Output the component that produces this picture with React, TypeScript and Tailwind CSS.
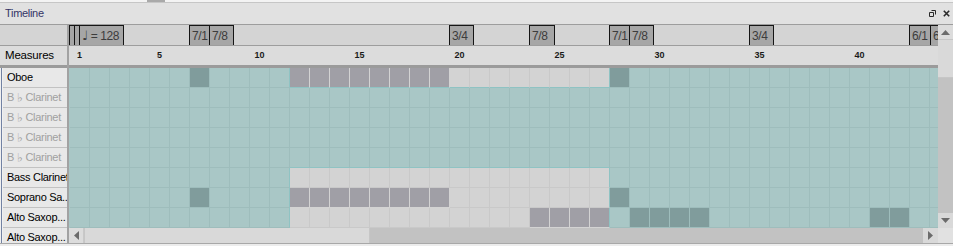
import React from "react";

type C = "t" | "T" | "g" | "G";
const COLS = 44;

function mkRow(spec: [number, number, C][]): C[] {
  const arr: C[] = Array(COLS).fill("t");
  for (const [a, b, c] of spec) for (let m = a; m <= b; m++) arr[m - 1] = c;
  return arr;
}

const rows: { label: string; muted?: boolean; cells: C[] }[] = [
  { label: "Oboe", cells: mkRow([[7, 7, "T"], [12, 19, "G"], [20, 27, "g"], [28, 28, "T"]]) },
  { label: "Clarinet", muted: true, cells: mkRow([]) },
  { label: "Clarinet", muted: true, cells: mkRow([]) },
  { label: "Clarinet", muted: true, cells: mkRow([]) },
  { label: "Clarinet", muted: true, cells: mkRow([]) },
  { label: "Bass Clarinet", cells: mkRow([[12, 27, "g"]]) },
  { label: "Soprano Sa..", cells: mkRow([[7, 7, "T"], [12, 19, "G"], [20, 27, "g"], [28, 28, "T"]]) },
  { label: "Alto Saxop...", cells: mkRow([[12, 23, "g"], [24, 27, "G"], [29, 32, "T"], [41, 42, "T"]]) },
];

const isGray = (c: C | undefined) => c === "g" || c === "G";

const bgOf: Record<C, string> = {
  t: "bg-[#a9c7c6]",
  T: "bg-[#809c9c]",
  g: "bg-[#d3d3d3]",
  G: "bg-[#a09fa6]",
};
const lineOf: Record<C, string> = {
  t: "#9ebdbc",
  T: "#9ebdbc",
  g: "#c9c9c9",
  G: "#d3d3d3",
};

function Cell({ c, right, below }: { c: C; right?: C; below?: C }) {
  const edge = "#8fc3c3";
  const rc = right !== undefined && isGray(c) !== isGray(right) ? edge : lineOf[c];
  const bc = below !== undefined && isGray(c) !== isGray(below) ? edge : lineOf[c];
  return (
    <div
      className={`w-[20px] h-[20px] shrink-0 border-r border-b ${bgOf[c]}`}
      style={{ borderRightColor: rc, borderBottomColor: bc }}
    />
  );
}

const markers: { left: number; w: number; text: string; tempo?: boolean }[] = [
  { left: 0, w: 6, text: "" },
  { left: 5, w: 6, text: "" },
  { left: 10, w: 45, text: "= 128", tempo: true },
  { left: 120, w: 21, text: "7/1" },
  { left: 140, w: 25, text: "7/8" },
  { left: 380, w: 25, text: "3/4" },
  { left: 460, w: 26, text: "7/8" },
  { left: 540, w: 21, text: "7/1" },
  { left: 560, w: 25, text: "7/8" },
  { left: 680, w: 25, text: "3/4" },
  { left: 840, w: 22, text: "6/1" },
  { left: 861, w: 20, text: "6" },
];

const measureNums = [1, 5, 10, 15, 20, 25, 30, 35, 40];

function ArrowUp() {
  return (
    <svg width="9" height="5" viewBox="0 0 9 5"><path d="M0 5 L4.5 0 L9 5 Z" fill="#6b6b6b" /></svg>
  );
}
function ArrowDown() {
  return (
    <svg width="9" height="5" viewBox="0 0 9 5"><path d="M0 0 L4.5 5 L9 0 Z" fill="#6b6b6b" /></svg>
  );
}
function ArrowLeft() {
  return (
    <svg width="5" height="9" viewBox="0 0 5 9"><path d="M5 0 L0 4.5 L5 9 Z" fill="#6b6b6b" /></svg>
  );
}
function ArrowRight() {
  return (
    <svg width="5" height="9" viewBox="0 0 5 9"><path d="M0 0 L5 4.5 L0 9 Z" fill="#6b6b6b" /></svg>
  );
}

export default function App() {
  return (
    <div
      className="w-[953px] h-[246px] overflow-hidden bg-[#f0f0f0] flex flex-col"
      style={{ fontFamily: '"Liberation Sans", Arial, sans-serif' }}
    >
      {/* top strip */}
      <div className="h-[3px] shrink-0 flex bg-[#f3f3f3] border-b border-[#c6c6c6]">
        <div className="w-[147px]" />
        <div className="w-[18px] bg-[#a9a9a9]" />
      </div>

      {/* title bar */}
      <div className="h-[22px] shrink-0 bg-[#e1e1e1] border-b border-[#9d9d9d] flex items-center justify-between pl-[5px] pr-[3px]">
        <span className="text-[11px] tracking-[-0.3px] text-[#343466] leading-none">Timeline</span>
        <div className="flex items-center gap-[7px] pb-[1px]">
          <svg width="7" height="7" viewBox="0 0 7 7">
            <path d="M0.5 2.5 H4.5 V6.5 H0.5 Z" fill="none" stroke="#2a2a2a" strokeWidth="1" />
            <path d="M2.5 0.5 H6.5 V4.5" fill="none" stroke="#2a2a2a" strokeWidth="1" />
          </svg>
          <svg width="7" height="7" viewBox="0 0 7 7">
            <path d="M0.8 0.8 L6.2 6.2 M6.2 0.8 L0.8 6.2" stroke="#2a2a2a" strokeWidth="1.6" />
          </svg>
        </div>
      </div>

      {/* body */}
      <div className="h-[218px] shrink-0 flex">
        {/* labels column */}
        <div className="w-[69px] shrink-0 flex flex-col overflow-hidden border-r-2 border-[#a2a2a2]">
          <div className="h-[21px] shrink-0 bg-[#d4d4d4] border-b border-[#9d9d9d]" />
          <div className="h-[19px] shrink-0 bg-[#dcdcdc] flex items-center pl-[5px] text-[11.5px] tracking-[-0.2px] text-black">
            Measures
          </div>
          <div className="h-[3px] shrink-0 bg-[#9b9b9b]" />
          <div className="flex flex-col border-l border-[#7282a3] ml-[1px]">
            {[...rows, { label: "Alto Saxop...", cells: [] as C[] }].map((r, i) => {
              const muted = (r as { muted?: boolean }).muted;
              return (
                <div
                  key={i}
                  className={`h-[20px] shrink-0 bg-[#e8e8e8] border-b border-[#c2c2c2] flex items-center pl-[4px] ml-[1px] text-[11px] tracking-[-0.3px] whitespace-nowrap overflow-hidden ${
                    muted ? "text-[#a0a0a0]" : "text-black"
                  }`}
                >
                  {muted ? (
                    <>
                      <span>B</span>
                      <span
                        className="text-[12px] leading-none mx-[3px]"
                        style={{ fontFamily: '"DejaVu Sans", sans-serif' }}
                      >
                        {"\u266D"}
                      </span>
                      <span>{r.label}</span>
                    </>
                  ) : (
                    r.label
                  )}
                </div>
              );
            })}
          </div>
        </div>

        {/* center canvas */}
        <div className="w-[869px] shrink-0 flex flex-col overflow-hidden">
          {/* tempo / time signature row */}
          <div className="h-[21px] shrink-0 relative bg-[#d4d4d4] border-b border-[#9d9d9d] overflow-hidden">
            {markers.map((m, i) => (
              <div
                key={i}
                className="absolute top-0 h-[21px] bg-[#a6a6a6] border border-[#151515] flex items-center pl-[2px] text-[12px] tracking-[-0.4px] text-[#3c3c3c] whitespace-nowrap overflow-hidden"
                style={{ left: m.left, width: m.w }}
              >
                {m.tempo && (
                  <span
                    className="text-[13px] leading-none mr-[3px] text-[#3c3c3c]"
                    style={{ fontFamily: '"DejaVu Sans", sans-serif' }}
                  >
                    {"\u2669"}
                  </span>
                )}
                {m.text}
              </div>
            ))}
          </div>
          {/* measures numbers */}
          <div className="h-[19px] shrink-0 bg-[#dcdcdc] flex items-center pl-[1px]">
            {Array.from({ length: COLS }).map((_, i) => (
              <div
                key={i}
                className="w-[20px] shrink-0 pr-[1px] text-center text-[9px] font-bold text-[#1a1a1a]"
              >
                {measureNums.includes(i + 1) ? i + 1 : ""}
              </div>
            ))}
          </div>
          <div className="h-[3px] shrink-0 bg-[#9b9b9b]" />
          {/* grid */}
          <div className="h-[160px] shrink-0 flex flex-col bg-[#a9c7c6] pl-[1px] overflow-hidden">
            {rows.map((r, ri) => (
              <div key={ri} className="flex shrink-0">
                {r.cells.map((c, ci) => (
                  <Cell
                    key={ci}
                    c={c}
                    right={r.cells[ci + 1]}
                    below={rows[ri + 1] ? rows[ri + 1].cells[ci] : undefined}
                  />
                ))}
              </div>
            ))}
          </div>
          {/* horizontal scrollbar */}
          <div className="h-[15px] shrink-0 flex bg-[#c2c2c2]">
            <div className="w-[15px] shrink-0 bg-[#dcdcdc] border-r border-[#c8c8c8] flex items-center justify-center">
              <ArrowLeft />
            </div>
            <div className="w-[286px] shrink-0 bg-[#d9d9d9] border-x border-[#c6c6c6]" />
            <div className="flex-1" />
            <div className="w-[15px] shrink-0 bg-[#d9d9d9] flex items-center justify-center">
              <ArrowRight />
            </div>
          </div>
        </div>

        {/* vertical scrollbar */}
        <div className="w-[15px] shrink-0 flex flex-col">
          <div className="h-[203px] shrink-0 flex flex-col bg-[#c2c2c2]">
            <div className="h-[14px] shrink-0 bg-[#dcdcdc] flex items-center justify-center">
              <ArrowUp />
            </div>
            <div className="h-[39px] shrink-0 bg-[#d9d9d9] border-y border-[#c6c6c6]" />
            <div className="flex-1" />
            <div className="h-[15px] shrink-0 bg-[#d9d9d9] flex items-center justify-center">
              <ArrowDown />
            </div>
          </div>
          <div className="flex-1 bg-[#e1e1e1]" />
        </div>
      </div>

      {/* bottom strip */}
      <div className="flex-1 bg-[#ececec] border-t border-[#a8a8a8]" />
    </div>
  );
}
